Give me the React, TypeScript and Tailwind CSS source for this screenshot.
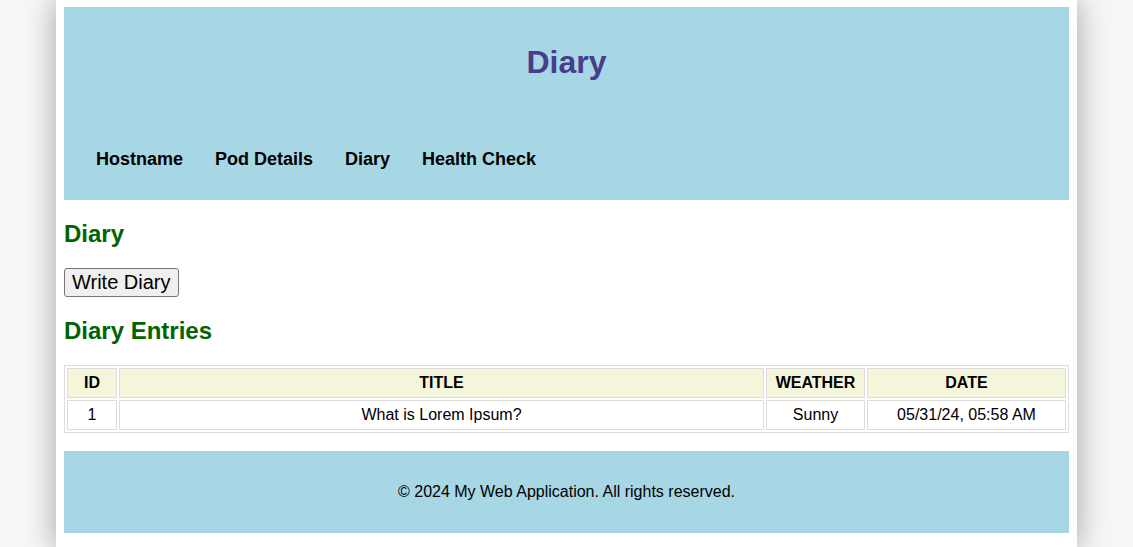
import React from 'react';

const NAV = ['Hostname', 'Pod Details', 'Diary', 'Health Check'];

const ENTRIES = [
  { id: 1, title: 'What is Lorem Ipsum?', weather: 'Sunny', date: '05/31/24, 05:58 AM' },
];

export default function App() {
  return (
    <div className="min-h-screen bg-[#f7f7f7] font-['Liberation_Sans',Arial,sans-serif] text-black">
      <div className="mx-auto min-h-screen w-[1021px] bg-white px-2 pt-[7px] pb-4 shadow-[0_0_30px_rgba(0,0,0,0.35)]">
        {/* Header */}
        <header className="bg-[#a7d7e5] pt-[37px] pb-[30px]">
          <h1 className="text-center text-[32px] font-bold leading-[37px] text-[#483d8b]">Diary</h1>
          <nav className="mt-[68px] flex gap-8 pl-8">
            {NAV.map(item => (
              <a key={item} href="#" className="text-[18px] font-bold leading-[21px] text-black">
                {item}
              </a>
            ))}
          </nav>
        </header>

        <main>
          <h2 className="mt-5 text-2xl font-bold leading-7 text-[#006400]">Diary</h2>
          <button className="mt-5 block rounded-[3px] border border-[#767676] bg-[#efefef] px-[7px] py-[2px] text-[20px] leading-[23px] text-black">
            Write Diary
          </button>

          <h2 className="mt-5 text-2xl font-bold leading-7 text-[#006400]">Diary Entries</h2>

          <table className="mt-5 w-full table-fixed border-separate border-spacing-[2px] border border-[#dddddd] text-[16px] leading-5">
            <thead>
              <tr className="bg-[#f5f5dc]">
                <th className="w-[50px] border border-[#dddddd] px-2 py-1 font-bold">ID</th>
                <th className="border border-[#dddddd] px-2 py-1 font-bold">TITLE</th>
                <th className="w-[99px] border border-[#dddddd] px-2 py-1 font-bold">WEATHER</th>
                <th className="w-[199px] border border-[#dddddd] px-2 py-1 font-bold">DATE</th>
              </tr>
            </thead>
            <tbody>
              {ENTRIES.map(e => (
                <tr key={e.id}>
                  <td className="border border-[#dddddd] px-2 py-1 text-center">{e.id}</td>
                  <td className="border border-[#dddddd] px-2 py-1 text-center">{e.title}</td>
                  <td className="border border-[#dddddd] px-2 py-1 text-center">{e.weather}</td>
                  <td className="border border-[#dddddd] px-2 py-1 text-center">{e.date}</td>
                </tr>
              ))}
            </tbody>
          </table>
        </main>

        {/* Footer */}
        <footer className="mt-[18px] flex h-[82px] items-center justify-center bg-[#a7d7e5]">
          <p className="text-[16px] leading-5">© 2024 My Web Application. All rights reserved.</p>
        </footer>
      </div>
    </div>
  );
}
